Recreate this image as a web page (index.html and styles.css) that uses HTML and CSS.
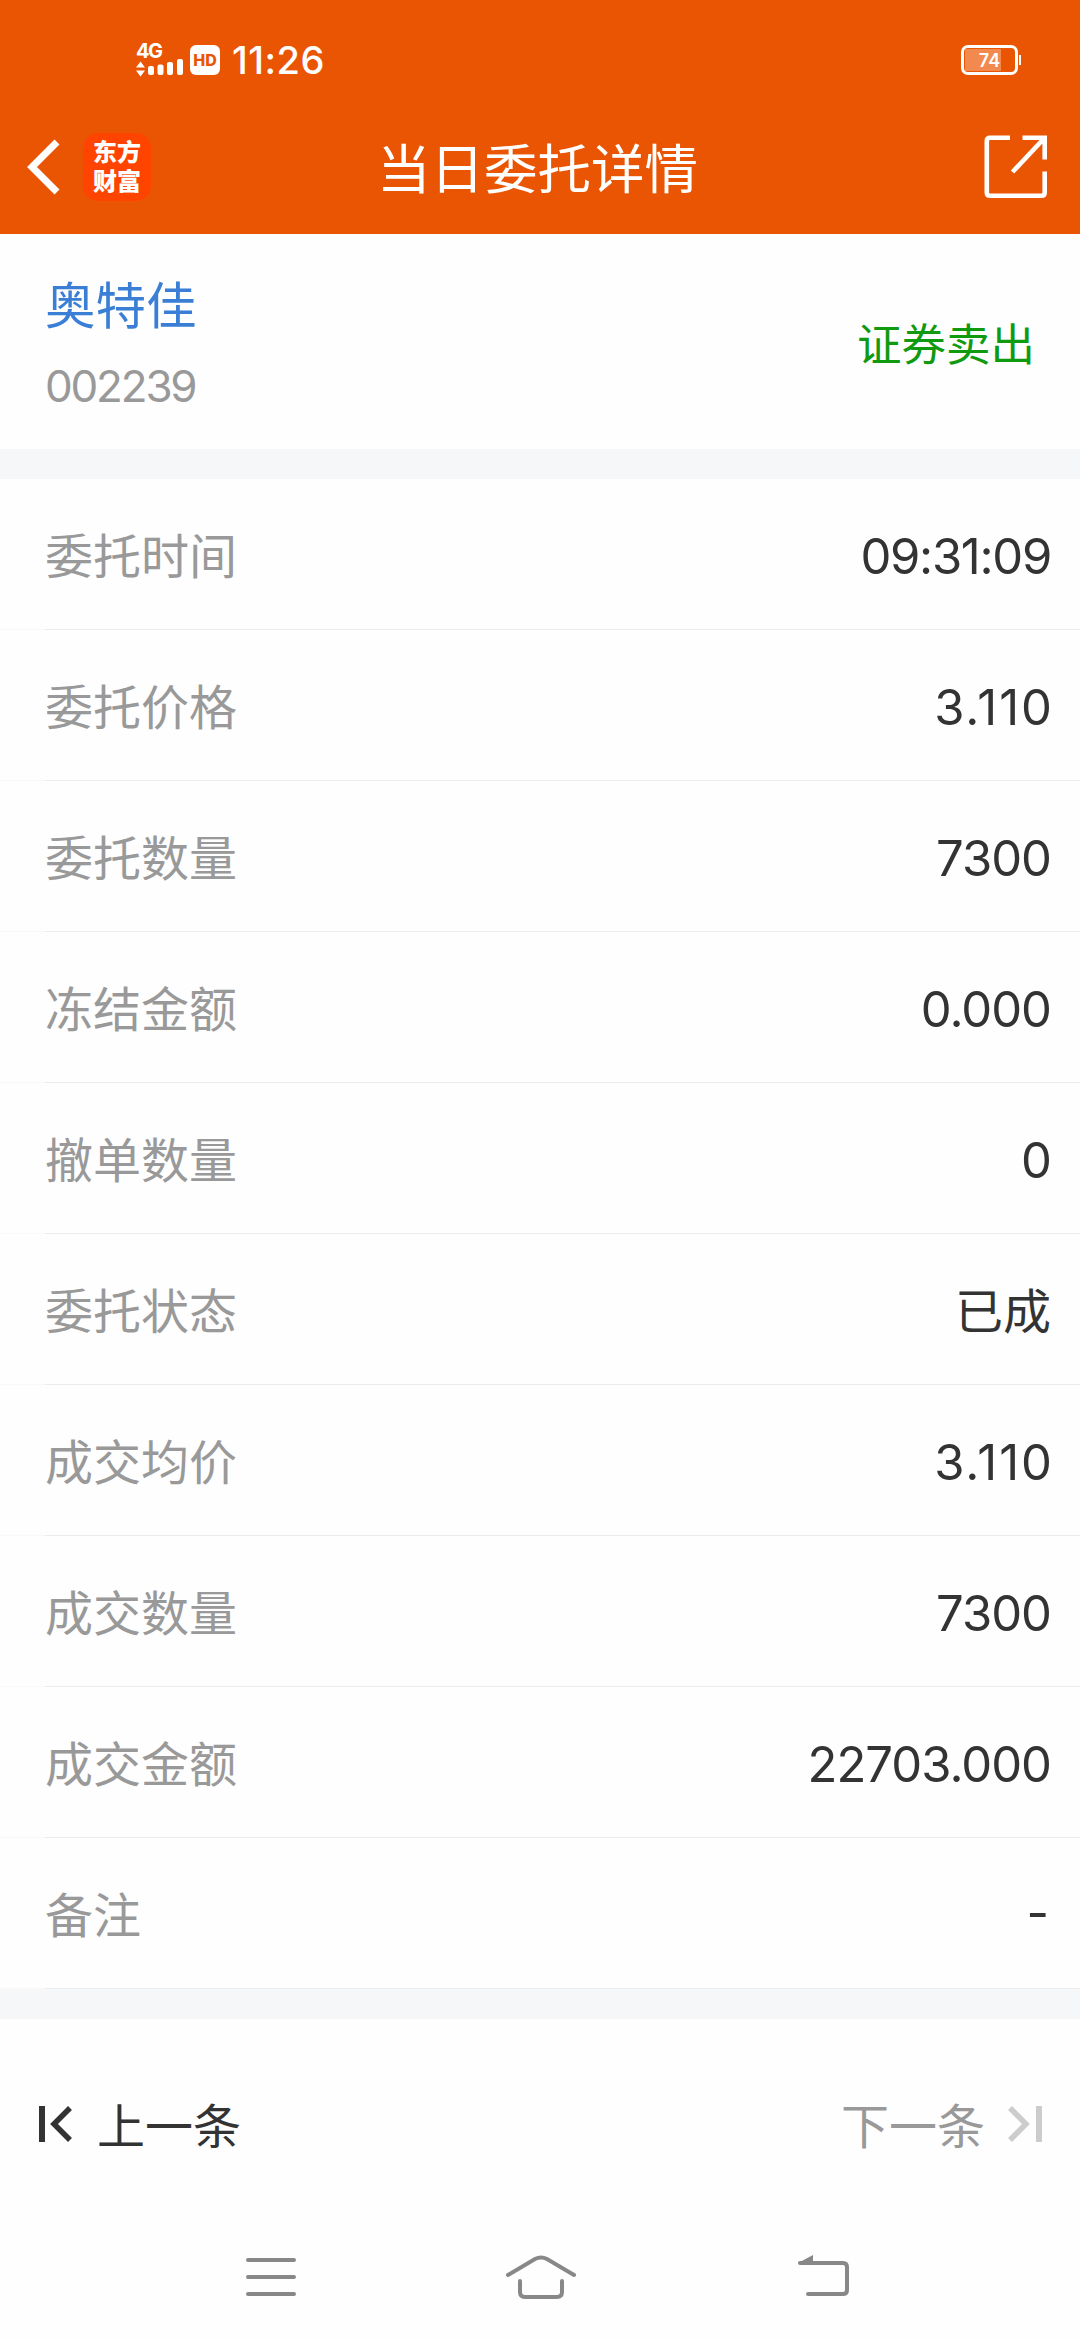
FILE: index.html
```html
<!doctype html>
<html lang="zh-CN">
    <head>
        <meta charset="UTF-8" />
        <meta name="viewport" content="width=device-width, initial-scale=1.0" />
        <title>当日委托详情</title>
        <link rel="stylesheet" href="styles.css">
    </head>
    <body>
        <header class="header">
            <div class="status-bar">
                <div class="status-left">
                    <div class="network">
                        <span class="network-type">4G</span>
                        <svg width="48" height="16" viewBox="0 0 48 16" fill="#fff">
                            <path d="M0 6.5 4.5 0.5 9 6.5zM0 9.5 4.5 15.5 9 9.5z" />
                            <rect x="12" y="5" width="6" height="9" rx="2" />
                            <rect x="21.5" y="3.5" width="6" height="10.5" rx="2" />
                            <rect x="31" y="1" width="6" height="13" rx="2" />
                            <rect x="41" y="-2" width="6" height="16" rx="2" />
                        </svg>
                    </div>
                    <span class="hd">HD</span>
                    <span class="clock">11:26</span>
                </div>
                <div class="battery"><span>74</span></div>
            </div>
            <div class="title-bar">
                <div class="title-left">
                    <svg width="34" height="56" viewBox="0 0 34 56" fill="none" stroke="#fff" stroke-width="7">
                        <path d="M30 3 5 28l25 25" />
                    </svg>
                    <div class="logo">东方<br>财富</div>
                </div>
                <h1>当日委托详情</h1>
                <svg class="share" width="64" height="64" viewBox="0 0 64 64" fill="none" stroke="#fff" stroke-width="4.6">
                    <path d="M26 2.8H6Q2.8 2.8 2.8 6v51.5q0 3.2 3.2 3.2h51.5q3.2 0 3.2-3.2V36.5" />
                    <path d="M38.500 2.8h22.2V24.5M60 3.5 28.500 37" />
                </svg>
            </div>
        </header>

        <section class="stock">
            <div>
                <div class="stock-name">奥特佳</div>
                <div class="stock-code">002239</div>
            </div>
            <div class="trade-type">证券卖出</div>
        </section>

        <ul class="details">
            <li><span class="label">委托时间</span><span class="value time">09:31:09</span></li>
            <li><span class="label">委托价格</span><span class="value price">3.110</span></li>
            <li><span class="label">委托数量</span><span class="value">7300</span></li>
            <li><span class="label">冻结金额</span><span class="value">0.000</span></li>
            <li><span class="label">撤单数量</span><span class="value">0</span></li>
            <li><span class="label">委托状态</span><span class="value text">已成</span></li>
            <li><span class="label">成交均价</span><span class="value price">3.110</span></li>
            <li><span class="label">成交数量</span><span class="value">7300</span></li>
            <li><span class="label">成交金额</span><span class="value">22703.000</span></li>
            <li><span class="label">备注</span><span class="value dash">-</span></li>
        </ul>

        <div class="pager">
            <a class="prev">
                <svg width="34" height="36" viewBox="0 0 34 36" fill="none" stroke="currentColor">
                    <path stroke-width="6" d="M4 0v36" />
                    <path stroke-width="5.5" d="M32 2 16 18l16 16" />
                </svg>
                <span>上一条</span>
            </a>
            <a class="next">
                <span>下一条</span>
                <svg width="34" height="36" viewBox="0 0 34 36" fill="none" stroke="currentColor">
                    <path stroke-width="6" d="M31 0v36" />
                    <path stroke-width="5.5" d="M2 2l16 16L2 34" />
                </svg>
            </a>
        </div>

        <nav class="system-nav">
            <svg width="50" height="44" viewBox="0 0 50 44">
                <path d="M2 5h46M2 22h46M2 39h46" />
            </svg>
            <svg width="70" height="44" viewBox="0 0 70 44">
                <path d="M2 20 29 4q6-3 12 0l27 16M14 26v11q0 5 5 5h32q5 0 5-5V26" />
            </svg>
            <svg width="52" height="44" viewBox="0 0 52 44">
                <path d="M2 8h43q4 0 4 4v23q0 4-4 4H10" />
                <path class="arrow" d="M0 8 15 0v8z" />
            </svg>
        </nav>
    </body>
</html>
```
FILE: styles.css
```css
* {
    box-sizing: border-box;
}

body {
    margin: 0;
    background-color: #fefefe;
    color: #333;
    font-family: Inter, "Noto Sans CJK SC", sans-serif;
}

svg {
    display: block;
    flex-shrink: 0;
}

.header {
    height: 234px;
    background-color: #ea5504;
    color: #fff;
}

.status-bar {
    display: flex;
    justify-content: space-between;
    align-items: center;
    height: 120px;
    padding: 0 62px 0 136px;
}

.status-left {
    display: flex;
    align-items: center;
}

.network {
    width: 54px;
    height: 34px;
}

.network svg {
    overflow: visible;
    margin-top: 2px;
}

.network-type {
    display: block;
    height: 16px;
    font-size: 20px;
    line-height: 16px;
    font-weight: 700;
    letter-spacing: -1.5px;
}

.hd {
    width: 30px;
    height: 30px;
    border-radius: 6px;
    background-color: #fff;
    color: #ea5504;
    font-size: 16px;
    line-height: 30px;
    font-weight: 800;
    text-align: center;
}

.clock {
    margin-left: 12px;
    font-size: 38px;
    line-height: 40px;
    font-weight: 500;
    letter-spacing: 0.5px;
}

.battery {
    position: relative;
    width: 57px;
    height: 30px;
    border: 3px solid #fff;
    border-radius: 7px;
    background: linear-gradient(#f28a50, #f28a50) 1px 1px / 36px 22px no-repeat;
    color: #fff;
    font-size: 18px;
    line-height: 25px;
    font-weight: 600;
    text-align: center;
}

.battery::after {
    content: "";
    position: absolute;
    right: -6px;
    top: 7px;
    width: 2px;
    height: 10px;
    background-color: #fff;
}

.title-bar {
    display: grid;
    grid-template-columns: 1fr auto 1fr;
    align-items: center;
    height: 93px;
    padding: 0 32px 0 27px;
}

.title-left {
    display: flex;
    align-items: center;
    gap: 22px;
}

.logo {
    width: 68px;
    height: 68px;
    padding-top: 5px;
    border-radius: 15px;
    background-color: #ff4400;
    font-size: 24px;
    line-height: 29px;
    font-weight: 900;
    text-align: center;
}

h1 {
    margin: 0;
    padding-top: 6px;
    font-size: 53.5px;
    line-height: 80px;
    font-weight: 400;
}

.share {
    justify-self: end;
}

.stock {
    display: flex;
    justify-content: space-between;
    align-items: center;
    height: 215px;
    padding: 0 45px;
}

.stock-name {
    padding-top: 9px;
    color: #3a7fd5;
    font-size: 50.5px;
    line-height: 80px;
}

.stock-code {
    color: #999;
    font-size: 44px;
    line-height: 80px;
    letter-spacing: -2.2px;
}

.trade-type {
    color: #109a10;
    font-size: 44.5px;
}

.details {
    margin: 0;
    padding: 0;
    border: solid #f6f7f9;
    border-width: 30px 0;
    list-style: none;
}

.details li {
    display: flex;
    justify-content: space-between;
    align-items: center;
    height: 151px;
    padding: 0 29px 0 45px;
    background: linear-gradient(to right, #f8f8f9 45px, #ebecee 45px) 0 100% / 100% 1px no-repeat;
}

.label {
    padding-bottom: 3px;
    color: #999;
    font-size: 48px;
}

.value {
    padding-top: 4px;
    font-size: 49px;
    letter-spacing: -1px;
}

.time {
    letter-spacing: -1.3px;
}

.price {
    margin-right: -3px;
    letter-spacing: 2px;
}

.text {
    padding: 0 0 3px;
    font-size: 48px;
    letter-spacing: 0;
}

.dash {
    padding: 0 3px 3px 0;
}

.pager {
    display: flex;
    justify-content: space-between;
    align-items: center;
    height: 210px;
    padding: 0 38px 0 38px;
    font-size: 48px;
}

.pager a {
    display: flex;
    align-items: center;
    gap: 25px;
}

.pager span {
    padding-bottom: 3px;
}

.pager .next {
    gap: 23px;
    color: #999;
}

.next svg {
    color: #ccc;
}

.system-nav {
    display: flex;
    padding: 26px 0 0 246px;
}

.system-nav svg {
    fill: none;
    stroke: #888;
    stroke-width: 4;
    stroke-linecap: round;
}

.system-nav svg:nth-child(2) {
    margin: 0 222px 0 210px;
}

.system-nav .arrow {
    fill: #888;
    stroke: none;
}
```
